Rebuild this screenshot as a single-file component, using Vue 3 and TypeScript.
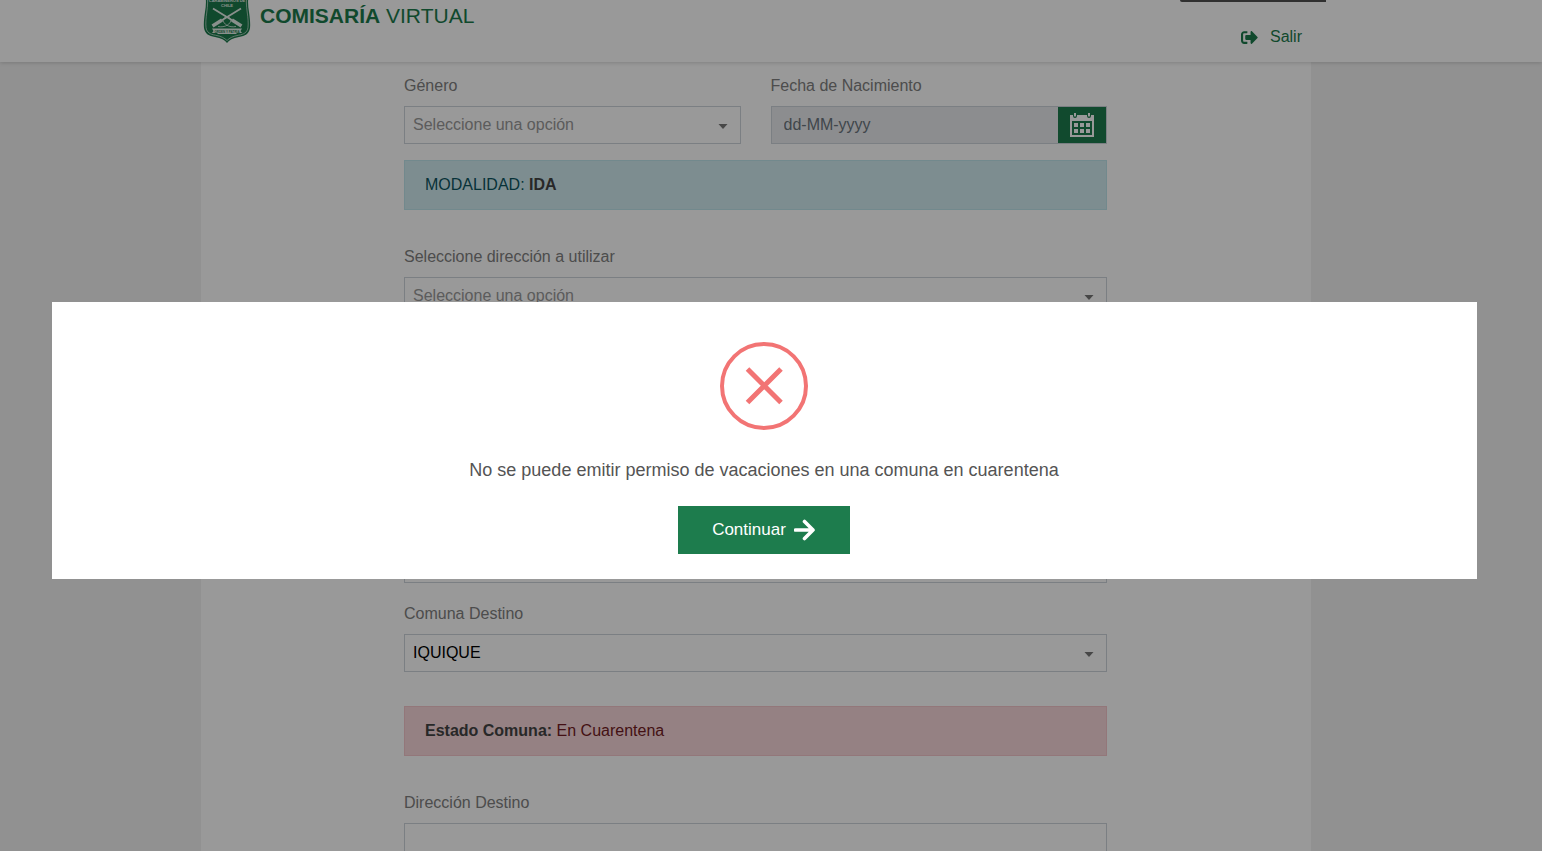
<script setup lang="ts">
import { ref } from 'vue'

interface SelectField {
  id: string
  label: string
  placeholder: string
}

const placeholder = 'Seleccione una opción'

const originFields: SelectField[] = [
  { id: 'direccion', label: 'Seleccione dirección a utilizar', placeholder },
  { id: 'region-origen', label: 'Región Origen', placeholder },
  { id: 'comuna-origen', label: 'Comuna Origen', placeholder },
]

const destinationFields: SelectField[] = [
  { id: 'region-destino', label: 'Región Destino', placeholder },
]

const comuna = ref('IQUIQUE')
const address = ref('')
const dialogOpen = ref(true)
</script>

<template>
  <div class="page">
    <header class="topbar">
      <div class="topbar-inner">
        <a class="brand" href="#">
          <svg class="shield" viewBox="0 0 52 44" aria-hidden="true">
            <path d="M4-6 H48 C46.500 0 47 6 48 12 C48.800 18 49.500 23 49 28 C48 34 44 36 38 37 C32 38 28 40 26 43 C24 40 20 38 14 37 C8 36 4 34 3 28 C2.500 23 3.200 18 4 12 C5 6 5.500 0 4-6Z" fill="#1b7a4c" />
            <path d="M6-6 H46 C45 0 45.300 6 46.200 12 C47 18 47.500 23 47 27.500 C46.200 32.500 43 34.300 37.500 35.200 C32 36.200 28.500 38 26 40.500 C23.500 38 20 36.200 14.500 35.200 C9 34.300 5.800 32.500 5 27.500 C4.500 23 5 18 5.800 12 C6.700 6 7 0 6-6Z" fill="none" stroke="#d5e6dc" stroke-width="0.700" />
            <text x="26" y="1.500" text-anchor="middle" font-size="4" font-weight="700" fill="#e5efe9">CARABINEROS DE</text>
            <text x="26" y="6.500" text-anchor="middle" font-size="4" font-weight="700" fill="#e5efe9">CHILE</text>
            <g fill="none" stroke="#e5efe9">
              <path d="M12 8.500 L34 22 M40 8.500 L18 22" stroke-width="1.800" />
              <path d="M31 20 L40.500 26 M21 20 L11.500 26" stroke-width="3.400" />
              <path d="M17 26.500 C24 28 30 24 30 19.500 C28 16 24 16 22 19.500 C22 24 28 28 35 26.500" stroke-width="0.800" />
            </g>
            <path d="M11 28.500 H41 L39.500 31 L41 33 H36 L35 34 H17 L16 33 H11 L12.500 31Z" fill="#e5efe9" />
            <text x="26" y="32.500" text-anchor="middle" font-size="3" font-weight="700" fill="#1b7a4c">ORDEN Y PATRIA</text>
          </svg>
          <span class="brand-name"><strong>COMISARÍA</strong> VIRTUAL</span>
        </a>
        <div class="session">
          <span class="session-tab"></span>
          <a class="logout" href="#">
            <svg viewBox="0 0 512 512" width="17" height="17" aria-hidden="true">
              <path fill="currentColor" d="M497 273L329 441c-15 15-41 4.500-41-17v-96H152c-13.300 0-24-10.700-24-24v-96c0-13.300 10.700-24 24-24h136V88c0-21.400 25.900-32 41-17l168 168c9.300 9.400 9.300 24.600 0 34zM192 436v-40c0-6.600-5.400-12-12-12H96c-17.700 0-32-14.300-32-32V160c0-17.700 14.300-32 32-32h84c6.600 0 12-5.400 12-12V76c0-6.600-5.400-12-12-12H96c-53 0-96 43-96 96v192c0 53 43 96 96 96h84c6.600 0 12-5.400 12-12z" />
            </svg>
            Salir
          </a>
        </div>
      </div>
    </header>

    <main class="content">
      <form class="sheet" @submit.prevent>
        <div class="row">
          <div class="field">
            <label for="genero">Género</label>
            <div class="select-wrap">
              <select id="genero" class="control muted">
                <option>{{ placeholder }}</option>
              </select>
              <svg class="caret" viewBox="0 0 10 5" aria-hidden="true"><path d="M0.500 0H9.500L5 5Z" /></svg>
            </div>
          </div>
          <div class="field">
            <label for="fecha">Fecha de Nacimiento</label>
            <div class="date-group">
              <input id="fecha" type="text" placeholder="dd-MM-yyyy" readonly />
              <button type="button" aria-label="Abrir calendario">
                <svg viewBox="0 0 24 24" width="24" height="24" aria-hidden="true">
                  <path fill="currentColor" fill-rule="evenodd" d="M0 2H24V24H0ZM2 8V22H22V8Z" />
                  <path d="M3 0H7V3Q7 5 5 5Q3 5 3 3ZM17 0H21V3Q21 5 19 5Q17 5 17 3Z" fill="#1d7c4d" />
                  <path d="M4 0H6V3Q5 4.500 4 3ZM18 0H20V3Q19 4.500 18 3Z" fill="currentColor" />
                  <path fill="currentColor" d="M4 10H8V14H4ZM10 10H14V14H10ZM16 10H20V14H16ZM4 16H8V20H4ZM10 16H14V20H10ZM16 16H20V20H16Z" />
                </svg>
              </button>
            </div>
          </div>
        </div>

        <div class="alert info">MODALIDAD: <strong>IDA</strong></div>

        <section class="group">
          <div v-for="f in originFields" :key="f.id" class="field">
            <label :for="f.id">{{ f.label }}</label>
            <div class="select-wrap">
              <select :id="f.id" class="control muted">
                <option>{{ f.placeholder }}</option>
              </select>
              <svg class="caret" viewBox="0 0 10 5" aria-hidden="true"><path d="M0.500 0H9.500L5 5Z" /></svg>
            </div>
          </div>
        </section>

        <section class="group destination">
          <div v-for="f in destinationFields" :key="f.id" class="field">
            <label :for="f.id">{{ f.label }}</label>
            <div class="select-wrap">
              <select :id="f.id" class="control muted">
                <option>{{ f.placeholder }}</option>
              </select>
              <svg class="caret" viewBox="0 0 10 5" aria-hidden="true"><path d="M0.500 0H9.500L5 5Z" /></svg>
            </div>
          </div>
          <div class="field">
            <label for="comuna-destino">Comuna Destino</label>
            <div class="select-wrap">
              <select id="comuna-destino" v-model="comuna" class="control">
                <option>IQUIQUE</option>
              </select>
              <svg class="caret" viewBox="0 0 10 5" aria-hidden="true"><path d="M0.500 0H9.500L5 5Z" /></svg>
            </div>
          </div>
        </section>

        <div class="alert danger"><strong>Estado Comuna:</strong> En Cuarentena</div>

        <section class="group">
          <div class="field">
            <label for="direccion-destino">Dirección Destino</label>
            <input id="direccion-destino" v-model="address" class="control" type="text" />
          </div>
        </section>
      </form>
    </main>

    <div v-if="dialogOpen" class="overlay">
      <div class="dialog" role="alertdialog" aria-modal="true" aria-labelledby="dialog-message">
        <svg class="error-icon" viewBox="0 0 88 88" width="88" height="88" aria-hidden="true">
          <circle cx="44" cy="44" r="42" fill="none" stroke="#f27474" stroke-width="4" />
          <path d="M27.500 27L61 60.500M61 27L27.500 60.500" stroke="#f27474" stroke-width="5" />
        </svg>
        <p id="dialog-message">No se puede emitir permiso de vacaciones en una comuna en cuarentena</p>
        <button type="button" class="confirm" @click="dialogOpen = false">
          Continuar
          <svg viewBox="0 0 22 22" width="22" height="22" aria-hidden="true">
            <path d="M1.500 11H19M10.500 2.500L19 11L10.500 19.500" fill="none" stroke="currentColor" stroke-width="3.600" stroke-linecap="round" stroke-linejoin="round" />
          </svg>
        </button>
      </div>
    </div>
  </div>
</template>

<style>
body {
  margin: 0;
}
</style>

<style scoped>
.page {
  height: 100vh;
  overflow: hidden;
  background: #f2f2f2;
  font-family: "Liberation Sans", Arial, sans-serif;
  font-size: 16px;
  line-height: 24px;
  color: #808080;
}
.page * {
  box-sizing: border-box;
}
button,
input,
select {
  font-family: inherit;
  font-size: inherit;
}
.topbar {
  position: relative;
  height: 62px;
  background: #fff;
  box-shadow: 0 1px 4px rgba(0, 0, 0, 0.16);
}
.topbar-inner {
  display: flex;
  justify-content: space-between;
  align-items: flex-start;
  max-width: 1140px;
  margin: 0 auto;
  padding-right: 15px;
}
.brand {
  display: flex;
  gap: 7px;
  color: #1b7a4c;
  text-decoration: none;
}
.shield {
  width: 52px;
  height: 44px;
}
.brand-name {
  font-size: 21px;
  line-height: 32px;
}
.session {
  display: flex;
  flex-direction: column;
  align-items: flex-end;
  gap: 23px;
}
.session-tab {
  width: 146px;
  height: 2px;
  border-radius: 0 0 0 4px;
  background: #505050;
}
.logout {
  display: flex;
  align-items: center;
  gap: 12px;
  padding-right: 24px;
  color: #1b7a4c;
  text-decoration: none;
}
.content {
  padding-right: 30px;
}
.sheet {
  max-width: 1110px;
  min-height: 100vh;
  margin: 0 auto;
  padding: 12px 204px 40px 203px;
  background: #fff;
}
.row {
  display: grid;
  grid-template-columns: 1fr 1fr;
  gap: 30px;
}
.field {
  display: flex;
  flex-direction: column;
  gap: 8px;
}
.group {
  display: flex;
  flex-direction: column;
  gap: 19px;
}
.destination {
  margin-top: 20px;
}
.select-wrap {
  position: relative;
}
.control {
  display: block;
  width: 100%;
  height: 38px;
  padding: 0 32px 2px 8px;
  border: 1px solid #ced4da;
  border-radius: 0;
  background: #fff;
  color: #000;
  appearance: none;
}
.control.muted {
  color: #999;
}
.caret {
  position: absolute;
  right: 13px;
  top: 18px;
  width: 10px;
  height: 5px;
  fill: #777;
  pointer-events: none;
}
.date-group {
  display: flex;
  height: 38px;
  border: 1px solid #ced4da;
}
.date-group input {
  flex: 1;
  min-width: 0;
  padding: 0 12px;
  border: 0;
  background: #e9ecef;
}
.date-group input::placeholder {
  color: #6c757d;
  opacity: 1;
}
.date-group button {
  display: grid;
  place-items: center;
  width: 48px;
  padding: 0;
  border: 0;
  background: #1d7c4d;
  color: #fff;
}
.alert {
  padding: 12px 20px;
  border: 1px solid;
}
.alert strong {
  color: #444;
}
.info {
  margin: 16px 0 35px;
  border-color: #bee5eb;
  background: #d1ecf1;
  color: #0c5460;
}
.danger {
  margin: 34px 0 35px;
  border-color: #f5c6cb;
  background: #f8d7da;
  color: #721c24;
}
.overlay {
  position: fixed;
  inset: 0;
  display: flex;
  align-items: center;
  padding: 30px 65px 0 52px;
  background: rgba(0, 0, 0, 0.4);
}
.dialog {
  display: flex;
  flex: 1;
  flex-direction: column;
  align-items: center;
  padding: 40px 1px 25px 0;
  background: #fff;
}
.dialog p {
  margin: 28px 0 24px;
  font-size: 18px;
  color: #545454;
}
.confirm {
  display: flex;
  align-items: center;
  justify-content: center;
  gap: 8px;
  width: 172px;
  height: 48px;
  border: 0;
  background: #1d7c4d;
  color: #fff;
  font-size: 17px;
}
</style>
